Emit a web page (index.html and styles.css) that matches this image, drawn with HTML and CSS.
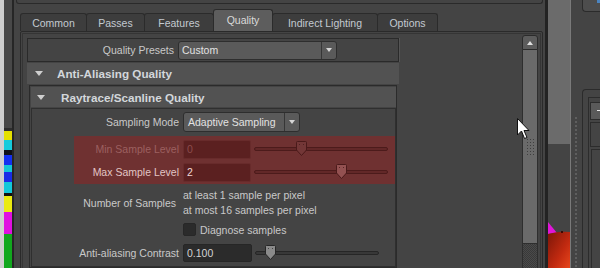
FILE: index.html
```html
<!DOCTYPE html>
<html>
<head>
    <title>Render Settings - Quality</title>
    <link rel="stylesheet" href="styles.css">
</head>
<body>
    <div class="desk-edge">
        <div class="edge-light"></div>
        <div class="edge-scene">
            <svg width="8" height="140" viewBox="0 0 8 140">
                <rect x="0" y="0" width="8" height="3" fill="#2e2e2e"/>
                <rect x="0" y="3" width="8" height="9" fill="#e4e000"/>
                <rect x="0" y="12" width="8" height="10" fill="#16cbdc"/>
                <rect x="0" y="22" width="8" height="5" fill="#101018"/>
                <rect x="0" y="27" width="8" height="10" fill="#1430f0"/>
                <rect x="0" y="37" width="8" height="7" fill="#14c4d6"/>
                <rect x="0" y="44" width="8" height="10" fill="#1a2ce6"/>
                <rect x="0" y="54" width="8" height="11" fill="#12c8d8"/>
                <rect x="0" y="65" width="8" height="3" fill="#111"/>
                <rect x="0" y="68" width="8" height="16" fill="#eaea10"/>
                <rect x="0" y="84" width="8" height="22" fill="#e010e0"/>
                <rect x="0" y="106" width="8" height="34" fill="#12a81e"/>
            </svg>
        </div>
    </div>

    <div class="window">
        <div class="topbar"></div>

        <div class="tabs">
            <div class="tab tab-common">Common</div>
            <div class="tab tab-passes">Passes</div>
            <div class="tab tab-features">Features</div>
            <div class="tab tab-quality active">Quality</div>
            <div class="tab tab-indirect">Indirect Lighting</div>
            <div class="tab tab-options">Options</div>
        </div>

        <div class="tab-panel">
            <div class="panel-inner">
                <div class="scroll-area">
                    <div class="column">
                        <div class="presets">
                            <div class="row-label">Quality Presets</div>
                            <div class="dropdown presets-dd">
                                <span class="dd-value">Custom</span>
                                <span class="dd-arrow"></span>
                            </div>
                        </div>

                        <div class="frame-header">
                            <span class="toggle"></span>Anti-Aliasing Quality
                        </div>
                        <div class="frame-body">
                            <div class="subframe">
                                <div class="frame-header sub">
                                    <span class="toggle"></span>Raytrace/Scanline Quality
                                </div>
                                <div class="frame-content">
                                    <div class="field-row">
                                        <div class="row-label">Sampling Mode</div>
                                        <div class="dropdown mode-dd">
                                            <span class="dd-value">Adaptive Sampling</span>
                                            <span class="dd-arrow"></span>
                                        </div>
                                    </div>

                                    <div class="red-block">
                                        <div class="field-row dim">
                                            <div class="row-label">Min Sample Level</div>
                                            <div class="num-input">0</div>
                                            <div class="slider red-slider">
                                                <div class="track"></div>
                                                <svg class="thumb" style="left: 42px" width="11" height="15" viewBox="0 0 11 15">
                                                    <path d="M1.5 0.5 H9.5 Q10.5 0.5 10.5 1.5 V9 L5.5 14.5 L0.5 9 V1.5 Q0.5 0.5 1.5 0.5 Z" fill="#733737" stroke="#4a1a1a"/>
                                                    <rect x="3" y="3" width="1" height="1" fill="#4e2020"/>
                                                    <rect x="7" y="3" width="1" height="1" fill="#4e2020"/>
                                                </svg>
                                            </div>
                                        </div>
                                        <div class="field-row">
                                            <div class="row-label">Max Sample Level</div>
                                            <div class="num-input">2</div>
                                            <div class="slider red-slider">
                                                <div class="track"></div>
                                                <svg class="thumb" style="left: 82px" width="11" height="15" viewBox="0 0 11 15">
                                                    <path d="M1.5 0.5 H9.5 Q10.5 0.5 10.5 1.5 V9 L5.5 14.5 L0.5 9 V1.5 Q0.5 0.5 1.5 0.5 Z" fill="#935151" stroke="#4a1a1a"/>
                                                    <rect x="3" y="3" width="1" height="1" fill="#5a2424"/>
                                                    <rect x="7" y="3" width="1" height="1" fill="#5a2424"/>
                                                </svg>
                                            </div>
                                        </div>
                                    </div>

                                    <div class="samples-row">
                                        <div class="row-label">Number of Samples</div>
                                        <div class="samples-text">
                                            <div>at least 1 sample per pixel</div>
                                            <div>at most 16 samples per pixel</div>
                                        </div>
                                    </div>

                                    <div class="check-row">
                                        <span class="checkbox"></span>
                                        <span>Diagnose samples</span>
                                    </div>

                                    <div class="field-row contrast-row">
                                        <div class="row-label">Anti-aliasing Contrast</div>
                                        <div class="num-input">0.100</div>
                                        <div class="slider contrast-slider">
                                            <div class="track"></div>
                                            <svg class="thumb" style="left: 10px" width="11" height="15" viewBox="0 0 11 15">
                                                <path d="M1.5 0.5 H9.5 Q10.5 0.5 10.5 1.5 V9 L5.5 14.5 L0.5 9 V1.5 Q0.5 0.5 1.5 0.5 Z" fill="#8a8a8a" stroke="#262626"/>
                                                <rect x="3" y="3" width="1" height="1" fill="#444"/>
                                                <rect x="7" y="3" width="1" height="1" fill="#444"/>
                                            </svg>
                                        </div>
                                    </div>
                                </div>
                            </div>
                        </div>
                    </div>
                </div>

                <div class="scrollbar">
                    <div class="sb-up"></div>
                    <div class="sb-thumb"><div class="grip"></div></div>
                    <div class="sb-track"></div>
                </div>
            </div>
        </div>
    </div>

    <div class="side-strip">
        <div class="side-top"></div>
        <svg width="22" height="46" viewBox="0 0 22 46">
            <defs>
                <linearGradient id="redBody" x1="0" y1="0" x2="1" y2="1">
                    <stop offset="0" stop-color="#7c1608"/>
                    <stop offset="0.6" stop-color="#c22a10"/>
                    <stop offset="1" stop-color="#e8461c"/>
                </linearGradient>
            </defs>
            <polygon points="0,0 0,12 9,11" fill="#e016d8"/>
            <path d="M0 12 Q11 9 22 10 V46 H0 Z" fill="url(#redBody)"/>
            <rect x="13" y="9" width="2" height="2" fill="#3a0a04"/>
        </svg>
    </div>

    <div class="dots-col"><div class="dots"></div></div>

    <div class="side-panels">
        <div class="mini-top"><span class="glint"></span></div>
        <div class="dock">
            <div class="dock-inner">
                <div class="dock-btn"></div>
                <div class="dock-box"></div>
                <div class="dock-box tall"></div>
            </div>
        </div>
    </div>

    <svg class="cursor" width="13" height="22" viewBox="0 0 13 22">
        <path d="M0.5 0.5 V17 L4.5 13 L7.5 20.5 L10 19.5 L7 12.5 H12 Z" fill="#ffffff" stroke="#111" stroke-width="1"/>
    </svg>
</body>
</html>
```

FILE: styles.css
```css
* { box-sizing: border-box; }

body {
    margin: 0;
    width: 600px;
    height: 268px;
    overflow: hidden;
    position: relative;
    display: flex;
    background: #444444;
    font-family: "Liberation Sans", Arial, sans-serif;
    font-size: 10.5px;
    color: #c9c9c9;
}

/* left edge: bit of desktop + viewport */
.desk-edge {
    width: 14px;
    flex-shrink: 0;
    display: flex;
    border-right: 2px solid #262626;
}
.edge-light { width: 4px; background: #cfcfcf; }
.edge-scene {
    width: 8px;
    background: #484848;
    display: flex;
    flex-direction: column;
    justify-content: flex-end;
}
.edge-scene svg { display: block; flex-shrink: 0; }

/* render settings window */
.window {
    width: 534px;
    flex-shrink: 0;
    display: flex;
    flex-direction: column;
    border-right: 3px solid #232323;
}
.topbar {
    height: 4px;
    flex-shrink: 0;
    margin: 0 2px;
    border: 1px solid #2a2a2a;
    border-top: none;
    border-radius: 0 0 3px 3px;
}

.tabs {
    display: flex;
    align-items: flex-end;
    flex-shrink: 0;
    height: 22px;
    margin-top: 5px;
    padding-left: 6px;
}
.tab {
    height: 18px;
    display: flex;
    align-items: center;
    justify-content: center;
    background: #3d3d3d;
    border: 1px solid #2b2b2b;
    border-bottom: none;
    border-radius: 3px 3px 0 0;
    margin-right: -1px;
    color: #c3cad1;
    white-space: nowrap;
}
.tab-common { width: 67px; }
.tab-passes { width: 59px; }
.tab-features { width: 70px; }
.tab-quality { width: 60px; }
.tab-indirect { width: 106px; }
.tab-options { width: 61px; }
.tab.active {
    height: 22px;
    padding-bottom: 2px;
    background: #5d5d5d;
    color: #dadada;
    position: relative;
}

.tab-panel {
    margin-left: 6px;
    width: 523px;
    height: 250px;
    flex-shrink: 0;
    border: 1px solid #2a2a2a;
    border-radius: 2px;
}
.panel-inner {
    margin: 1px;
    height: calc(100% - 2px);
    border: 1px solid #353535;
    padding: 1px 2px 0 1px;
    display: flex;
}
.scroll-area {
    flex: 1;
    padding: 3px 0 0 3px;
    overflow: hidden;
}
.column { width: 372px; }

.row-label { text-align: right; flex-shrink: 0; white-space: nowrap; }

.presets {
    height: 24px;
    display: flex;
    align-items: center;
    border: 1px solid #2a2a2a;
    box-shadow: 1px 0 0 #555;
}
.presets .row-label { width: 146px; }

.dropdown {
    display: flex;
    align-items: center;
    height: 19px;
    margin-left: 4px;
    background: #5a5a5a;
    border: 1px solid #2e2e2e;
    border-radius: 3px;
    color: #e2e2e2;
}
.presets-dd { width: 159px; }
.mode-dd { width: 117px; height: 20px; }
.dd-value { flex: 1; padding-left: 3px; white-space: nowrap; }
.mode-dd .dd-value { padding-left: 4px; }
.dd-arrow {
    width: 15px;
    align-self: stretch;
    border-left: 1px solid #363636;
    display: flex;
    align-items: center;
    justify-content: center;
}
.dd-arrow::after {
    content: "";
    border-left: 3.5px solid transparent;
    border-right: 3.5px solid transparent;
    border-top: 4px solid #d6d6d6;
}

.frame-header {
    height: 21px;
    margin-top: 1px;
    display: flex;
    align-items: center;
    padding-left: 8px;
    background: #525252;
    font-weight: bold;
    font-size: 11.7px;
    color: #d3d7db;
    white-space: nowrap;
}
.toggle {
    width: 0;
    height: 0;
    border-left: 4.5px solid transparent;
    border-right: 4.5px solid transparent;
    border-top: 5px solid #cfcfcf;
    margin-right: 14px;
}
.frame-header.sub {
    height: 20px;
    margin-top: 0;
    padding-left: 6px;
}
.frame-header.sub .toggle { margin-right: 16px; }

.frame-body { padding: 1px 2px 0; }
.subframe {
    border: 1px solid #2b2b2b;
    padding: 1px 0 0 1px;
}
.frame-content {
    margin-top: 1px;
    border: 1px solid #2f2f2f;
    padding: 3px 0 3px;
}

.field-row {
    display: flex;
    align-items: center;
    height: 20px;
}
.field-row .row-label { width: 147px; }

.num-input {
    width: 68px;
    height: 19px;
    margin-left: 4px;
    padding-left: 3px;
    display: flex;
    align-items: center;
    background: #2b2b2b;
    border: 1px solid #262626;
    border-radius: 2px;
    color: #d4d4d4;
}

.slider {
    position: relative;
    height: 20px;
    margin-left: 3px;
    display: flex;
    align-items: center;
}
.track {
    width: 100%;
    height: 4px;
    border: 1px solid #262626;
    border-radius: 2px;
    background: #383838;
}
.thumb { position: absolute; top: 2px; }

/* locked (keyed) attributes */
.red-block {
    margin: 4px 0 0 42px;
    padding: 3px 0 2px;
    background: #6f3131;
    display: flex;
    flex-direction: column;
    gap: 3px;
}
.red-block .row-label { width: 105px; color: #e2c6c6; }
.red-block .num-input {
    background: #5b2020;
    border-color: #682b2b;
    color: #f0d6d6;
}
.red-block .dim .row-label { color: #9c6060; }
.red-block .dim .num-input { color: #8c4c4c; }
.red-slider { width: 134px; }
.red-slider .track { background: #622828; border-color: #4c1b1b; }

.samples-row {
    display: flex;
    align-items: center;
    margin-top: 4px;
}
.samples-row .row-label { width: 144px; margin-right: 7px; }
.samples-text { line-height: 15px; white-space: nowrap; }

.check-row {
    display: flex;
    align-items: center;
    height: 19px;
    margin-top: 2px;
    padding-left: 151px;
}
.checkbox {
    width: 13px;
    height: 13px;
    margin-right: 4px;
    background: #2b2b2b;
    border: 1px solid #272727;
    border-radius: 2px;
}

.contrast-row { margin-top: 4px; }
.contrast-row .num-input { width: 69px; height: 18px; }
.contrast-slider { width: 124px; }

/* scrollbar */
.scrollbar {
    width: 16px;
    flex-shrink: 0;
    display: flex;
    flex-direction: column;
}
.sb-up {
    height: 15px;
    flex-shrink: 0;
    background: #5c5c5c;
    border: 1px solid #2b2b2b;
    border-radius: 3px 3px 0 0;
    display: flex;
    align-items: center;
    justify-content: center;
}
.sb-up::after {
    content: "";
    border-left: 3.5px solid transparent;
    border-right: 3.5px solid transparent;
    border-bottom: 4px solid #e0e0e0;
}
.sb-thumb {
    height: 194px;
    flex-shrink: 0;
    background: #6a6a6a;
    border: 1px solid #2e2e2e;
    border-top: none;
    display: flex;
    align-items: center;
    justify-content: center;
}
.grip {
    width: 11px;
    height: 20px;
    background-image:
        linear-gradient(90deg, #6a6a6a 2px, transparent 2px),
        linear-gradient(#6a6a6a 2px, #3e3e3e 2px);
    background-size: 3px 3px;
}
.sb-track {
    flex: 1;
    border-left: 1px solid #2e2e2e;
    border-right: 1px solid #2e2e2e;
    background: repeating-conic-gradient(#393939 0 25%, #4a4a4a 0 50%) 0 0 / 2px 2px;
}

/* right side: viewport edge + dock */
.side-strip {
    width: 23px;
    flex-shrink: 0;
    border-right: 1px solid #7a7a7a;
    display: flex;
    flex-direction: column;
}
.side-top { height: 144px; flex-shrink: 0; background: #6b6b6b; }
.side-strip svg { display: block; margin-top: auto; flex-shrink: 0; }

.dots-col {
    width: 11px;
    flex-shrink: 0;
    padding: 117px 0 0 4px;
}
.dots {
    width: 2px;
    height: 151px;
    background: repeating-linear-gradient(#5e5e5e 0 2px, transparent 2px 4px);
}

.side-panels {
    width: 18px;
    flex-shrink: 0;
    display: flex;
    flex-direction: column;
}
.mini-top {
    height: 12px;
    flex-shrink: 0;
    background: #4d4d4d;
    border: 1px solid #2b2b2b;
    border-top: none;
    border-right: none;
    border-radius: 0 0 0 4px;
    display: flex;
    justify-content: flex-end;
}
.glint { width: 3px; height: 3px; background: #4b84c0; }
.dock {
    margin-top: 77px;
    flex: 1;
    border: 1px solid #2b2b2b;
    border-right: none;
    border-radius: 4px 0 0 0;
    padding: 7px 0 0 5px;
}
.dock-inner {
    height: 100%;
    border: 1px solid #2c2c2c;
    border-right: none;
    padding: 4px 0 0 1px;
}
.dock-btn {
    height: 18px;
    background: #5a5a5a;
    border: 1px solid #2c2c2c;
    border-right: none;
    padding: 7px 0 0 6px;
}
.dock-btn::after {
    content: "";
    display: block;
    width: 4px;
    height: 1px;
    background: #e8e8e8;
}
.dock-box {
    height: 25px;
    margin-top: 2px;
    border: 1px solid #2c2c2c;
    border-right: none;
}
.dock-box.tall { height: 120px; margin-left: 1px; }

.cursor { position: absolute; left: 517px; top: 118px; }
```
